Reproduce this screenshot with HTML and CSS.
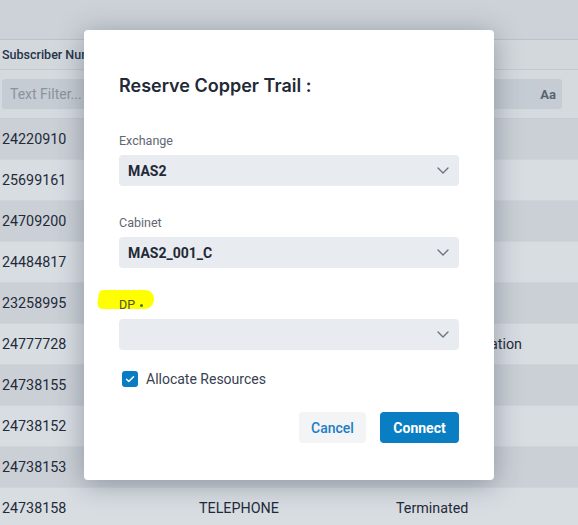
FILE: index.html
```html
<!DOCTYPE html>
<html>
<head>
<meta charset="utf-8">
<link rel="stylesheet" href="styles.css">
</head>
<body>
<div class="page">
  <div class="topbar"></div>
  <div class="head-row"><span class="head-cell">Subscriber Number</span></div>
  <div class="filter-row">
    <div class="filter-input"><span class="ph">Text Filter...</span><span class="aa">Aa</span></div>
  </div>
  <div class="rows">
    <div class="row dark"><span class="c1">24220910</span></div>
    <div class="row"><span class="c1">25699161</span></div>
    <div class="row dark"><span class="c1">24709200</span></div>
    <div class="row"><span class="c1">24484817</span></div>
    <div class="row dark"><span class="c1">23258995</span></div>
    <div class="row"><span class="c1">24777728</span><span class="c2"></span><span class="c3">Pending Installation</span></div>
    <div class="row dark"><span class="c1">24738155</span></div>
    <div class="row"><span class="c1">24738152</span></div>
    <div class="row dark"><span class="c1">24738153</span></div>
    <div class="row"><span class="c1">24738158</span><span class="c2">TELEPHONE</span><span class="c3">Terminated</span></div>
  </div>
</div>

<div class="modal">
  <h2 class="title">Reserve Copper Trail :</h2>

  <div class="field">
    <label class="label">Exchange</label>
    <div class="select"><span class="value">MAS2</span>
      <svg class="chev" width="12" height="7" viewBox="0 0 12 7"><path d="M1 1l5 5 5-5" fill="none" stroke="#6b7280" stroke-width="1.4" stroke-linecap="round" stroke-linejoin="round"/></svg>
    </div>
  </div>

  <div class="field">
    <label class="label">Cabinet</label>
    <div class="select"><span class="value">MAS2_001_C</span>
      <svg class="chev" width="12" height="7" viewBox="0 0 12 7"><path d="M1 1l5 5 5-5" fill="none" stroke="#6b7280" stroke-width="1.4" stroke-linecap="round" stroke-linejoin="round"/></svg>
    </div>
  </div>

  <div class="field">
    <label class="label dp"><span class="hl"></span><span class="dp-text">DP</span><span class="req"></span></label>
    <div class="select"><span class="value"></span>
      <svg class="chev" width="12" height="7" viewBox="0 0 12 7"><path d="M1 1l5 5 5-5" fill="none" stroke="#6b7280" stroke-width="1.4" stroke-linecap="round" stroke-linejoin="round"/></svg>
    </div>
  </div>

  <div class="check-row">
    <span class="checkbox"><svg width="16" height="16" viewBox="0 0 16 16"><path d="M4.5 8.2l2.3 2.3 4.7-4.8" fill="none" stroke="#fff" stroke-width="1.5" stroke-linecap="round" stroke-linejoin="round"/></svg></span>
    <span class="check-label">Allocate Resources</span>
  </div>

  <div class="actions">
    <button class="btn cancel">Cancel</button>
    <button class="btn connect">Connect</button>
  </div>
</div>
</body>
</html>
```

FILE: styles.css
```css
* { box-sizing: border-box; }
html, body { margin: 0; padding: 0; }
body {
  width: 578px;
  height: 525px;
  overflow: hidden;
  background: #d3d8dd;
  font-family: Roboto, "Liberation Sans", sans-serif;
  position: relative;
}
.page { width: 578px; }
.topbar {
  height: 40px;
  background: #cdd2d8;
  border-bottom: 1px solid #bcc2c9;
}
.head-row {
  height: 30px;
  background: #d3d8dd;
  border-bottom: 1px solid #c3c9cf;
  display: flex;
  align-items: center;
  padding-left: 2px;
}
.head-cell {
  font-size: 12.5px;
  font-weight: 500;
  color: #243447;
}
.filter-row {
  height: 49px;
  background: #d5dadf;
  border-bottom: 1px solid #c6ccd2;
  padding: 9px 16px 0 2px;
}
.filter-input {
  height: 30px;
  background: #c6ccd3;
  border-radius: 3px;
  display: flex;
  align-items: center;
  justify-content: space-between;
  padding: 0 6px 0 8px;
}
.ph { font-size: 14px; color: #8b939c; }
.aa { font-size: 13px; font-weight: 700; color: #5a6470; }
.rows { display: flex; flex-direction: column; }
.row {
  height: 41px;
  display: flex;
  align-items: center;
  background: #d8dde2;
  border-bottom: 1px solid #cfd4da;
  font-size: 14.3px;
  color: #1f2b3a;
}
.row.dark { background: #cbd0d6; }
.c1 { width: 199px; padding-left: 2px; }
.c2 { width: 197px; }

.modal {
  position: absolute;
  left: 84px;
  top: 30px;
  width: 410px;
  height: 450px;
  background: #fff;
  border-radius: 4px;
  box-shadow: 0 4px 28px rgba(40, 50, 65, 0.38);
  padding: 44px 35px 0 35px;
  display: flex;
  flex-direction: column;
}
.title {
  margin: 0;
  font-family: Inter, Roboto, sans-serif;
  font-size: 18px;
  line-height: 24px;
  font-weight: 600;
  color: #1f2937;
  margin-bottom: 35px;
}
.field { display: flex; flex-direction: column; margin-bottom: 29px; }
.field:nth-of-type(3) { margin-bottom: 21px; }
.label {
  font-size: 12.5px;
  line-height: 16px;
  color: #5f6773;
  margin-bottom: 6px;
}
.label.dp { position: relative; display: flex; align-items: center; }
.hl {
  position: absolute;
  left: -21px;
  top: -7px;
  width: 56px;
  height: 19px;
  background: #ffff00;
  border-radius: 4px 10px 8px 6px;
  transform: skewX(-8deg);
}
.dp-text { position: relative; color: #4f5224; }
.req {
  position: relative;
  width: 3px;
  height: 3px;
  border-radius: 50%;
  background: #3f7a10;
  margin-left: 5px;
}
.select {
  height: 31px;
  background: #e8ebef;
  border-radius: 4px;
  display: flex;
  align-items: center;
  justify-content: space-between;
  padding: 0 10px 0 9px;
}
.value {
  font-size: 14px;
  font-weight: 700;
  color: #1f2937;
}
.chev { display: block; }
.check-row {
  display: flex;
  align-items: center;
  padding-left: 3px;
  height: 16px;
  margin-bottom: 25px;
}
.checkbox {
  width: 16px;
  height: 16px;
  border-radius: 3px;
  background: #0a7cc4;
  display: block;
}
.checkbox svg { display: block; }
.check-label {
  margin-left: 8px;
  font-size: 14px;
  color: #374151;
}
.actions {
  display: flex;
  justify-content: flex-end;
  gap: 14px;
}
.btn {
  height: 31px;
  border: none;
  border-radius: 4px;
  font-family: Roboto, "Liberation Sans", sans-serif;
  font-size: 14px;
  padding: 0;
}
.cancel {
  width: 67px;
  background: #f3f4f6;
  color: #1c7ec4;
  font-weight: 500;
}
.connect {
  width: 79px;
  background: #0a7ec2;
  color: #fff;
  font-weight: 700;
}
```
